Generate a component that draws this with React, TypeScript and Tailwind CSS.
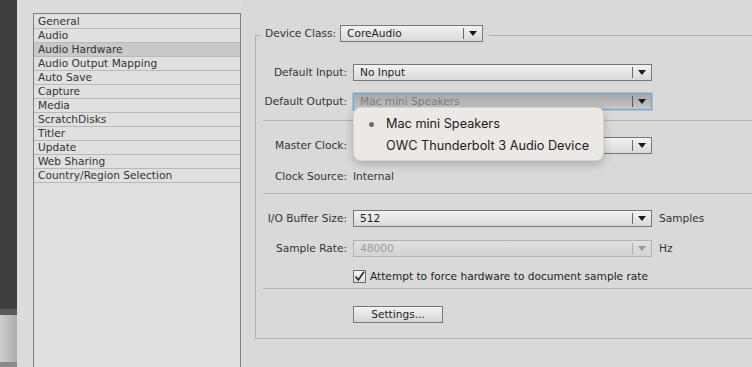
import React from "react";

const UI = { fontFamily: '"DejaVu Sans", Verdana, sans-serif' };
const MENU = { fontFamily: 'Inter, "Noto Sans", sans-serif' };

function Arrow({ color = "#1a1a1a" }: { color?: string }) {
  return (
    <svg width="8" height="5" viewBox="0 0 8 5">
      <path d="M0 0 H8 L4 5 Z" fill={color} />
    </svg>
  );
}

type Variant = "normal" | "focused" | "disabled";

function Select({
  value,
  width,
  variant = "normal",
}: {
  value: string;
  width: string;
  variant?: Variant;
}) {
  const box =
    variant === "focused"
      ? "border-[#6fa7d6] bg-gradient-to-b from-[#a7a7a7] to-[#c6c6c6] text-[#7c7c7c] shadow-[0_0_0_1px_rgba(120,170,215,0.45)]"
      : variant === "disabled"
      ? "border-[#b3b3b3] bg-gradient-to-b from-[#e0e0e0] to-[#d3d3d3] text-[#9c9c9c]"
      : "border-[#777777] bg-gradient-to-b from-[#f3f3f3] to-[#d9d9d9] text-[#1e1e1e]";
  const div =
    variant === "disabled" ? "bg-[#b0b0b0]" : variant === "focused" ? "bg-[#5a5a5a]" : "bg-[#6a6a6a]";
  return (
    <div className={`${width} h-[17px] border flex items-center ${box}`}>
      <span className="flex-1 pl-[6px] leading-none truncate">{value}</span>
      <span className={`w-px h-[11px] ${div}`} />
      <span className="w-[18px] flex items-center justify-center">
        <Arrow color={variant === "disabled" ? "#9a9a9a" : "#1a1a1a"} />
      </span>
    </div>
  );
}

function Row({
  label,
  children,
  labelColor = "text-[#333333]",
  className = "",
}: {
  label: string;
  children: React.ReactNode;
  labelColor?: string;
  className?: string;
}) {
  return (
    <div className={`flex items-center h-[17px] ${className}`}>
      <div className={`w-[91px] text-right ${labelColor} leading-none`}>{label}</div>
      <div className="ml-[6px] flex items-center">{children}</div>
    </div>
  );
}

function Sep({ className = "" }: { className?: string }) {
  return <div className={`ml-[7px] h-px bg-[#b5b5b5] ${className}`} />;
}

const items = [
  "General",
  "Audio",
  "Audio Hardware",
  "Audio Output Mapping",
  "Auto Save",
  "Capture",
  "Media",
  "ScratchDisks",
  "Titler",
  "Update",
  "Web Sharing",
  "Country/Region Selection",
];

export default function App() {
  return (
    <div
      className="relative w-[752px] h-[367px] overflow-hidden flex bg-[#d9d9d9] text-[10.6px]"
      style={UI}
    >
      {/* left dark strip */}
      <div className="w-[17px] h-full flex flex-col">
        <div className="h-[309px] bg-[#3f3f3f]" />
        <div className="h-[6px] bg-[#5b5b5b]" />
        <div className="h-[47px] bg-gradient-to-r from-[#cfcfcf] to-[#acacac]" />
        <div className="flex-1 bg-[#8a8a8a]" />
      </div>

      {/* left pane with list */}
      <div className="w-[224px] h-full bg-[#dcdcdc] pl-[16px] pt-[13px]">
        <div className="w-[208px] h-[400px] border border-[#7e7e7e] bg-[#e0e0e0] pt-px">
          {items.map((it) => (
            <div
              key={it}
              className={`h-[14px] border-b border-[#b9b9b9] pl-[4px] flex items-center leading-none text-[#333333] ${
                it === "Audio Hardware" ? "bg-[#c9c9c9]" : ""
              }`}
            >
              {it}
            </div>
          ))}
        </div>
      </div>

      {/* right pane */}
      <div className="flex-1 h-full pl-[14px] pt-[35px]">
        <div className="h-[304px] border-l border-t border-b border-[#b0b0b0] flex flex-col">
          {/* legend */}
          <div className="-mt-[11px] ml-[5px] self-start flex items-center bg-[#d9d9d9] pl-[4px] pr-[6px] h-[17px]">
            <span className="w-[75px] text-[#333333] leading-none">Device Class:</span>
            <Select value="CoreAudio" width="w-[143px]" />
          </div>

          <Row label="Default Input:" className="mt-[22px]">
            <Select value="No Input" width="w-[299px]" />
          </Row>
          <Row label="Default Output:" className="mt-[12px]">
            <Select value="Mac mini Speakers" width="w-[299px]" variant="focused" />
          </Row>

          <Sep className="mt-[10px]" />

          <Row label="Master Clock:" className="mt-[16px]">
            <Select value="" width="w-[299px]" />
          </Row>
          <Row label="Clock Source:" className="mt-[14px]">
            <span className="text-[#333333] leading-none">Internal</span>
          </Row>

          <Sep className="mt-[8px]" />

          <Row label="I/O Buffer Size:" className="mt-[16px]">
            <Select value="512" width="w-[299px]" />
            <span className="ml-[7px] text-[#333333] leading-none">Samples</span>
          </Row>
          <Row label="Sample Rate:" className="mt-[13px]">
            <Select value="48000" width="w-[299px]" variant="disabled" />
            <span className="ml-[7px] text-[#333333] leading-none">Hz</span>
          </Row>

          <div className="mt-[13px] h-[13px] flex items-center pl-[97px]">
            <div className="w-[13px] h-[13px] border border-[#6c6c6c] bg-gradient-to-b from-[#f6f6f6] to-[#dedede] flex items-center justify-center">
              <svg width="11" height="11" viewBox="0 0 11 11">
                <path d="M1.5 5.5 L4.3 9 L10 0.8" stroke="#222" strokeWidth="1.5" fill="none" />
              </svg>
            </div>
            <span className="ml-[4px] text-[#1e1e1e] leading-none">
              Attempt to force hardware to document sample rate
            </span>
          </div>

          <Sep className="mt-[5px]" />

          <div className="mt-[17px] pl-[97px]">
            <div className="w-[90px] h-[17px] border border-[#777777] bg-gradient-to-b from-[#f3f3f3] to-[#d6d6d6] flex items-center justify-center text-[#1e1e1e] leading-none">
              Settings...
            </div>
          </div>
        </div>
      </div>

      {/* popup menu overlay */}
      <div
        className="absolute left-[353px] top-[107px] w-[251px] h-[54px] rounded-[8px] bg-[#ebe8e5] border border-[rgba(0,0,0,0.08)] shadow-[0_3px_10px_rgba(0,0,0,0.22)] py-[5px] text-[12.7px] text-[#1c1c1c]"
        style={MENU}
      >
        <div className="h-[22px] flex items-center">
          <span className="w-[32px] flex justify-center pl-[2px]">
            <span className="w-[5px] h-[5px] rounded-full bg-[#6b6b6b]" />
          </span>
          <span>Mac mini Speakers</span>
        </div>
        <div className="h-[22px] flex items-center">
          <span className="w-[32px]" />
          <span>OWC Thunderbolt 3 Audio Device</span>
        </div>
      </div>
    </div>
  );
}
